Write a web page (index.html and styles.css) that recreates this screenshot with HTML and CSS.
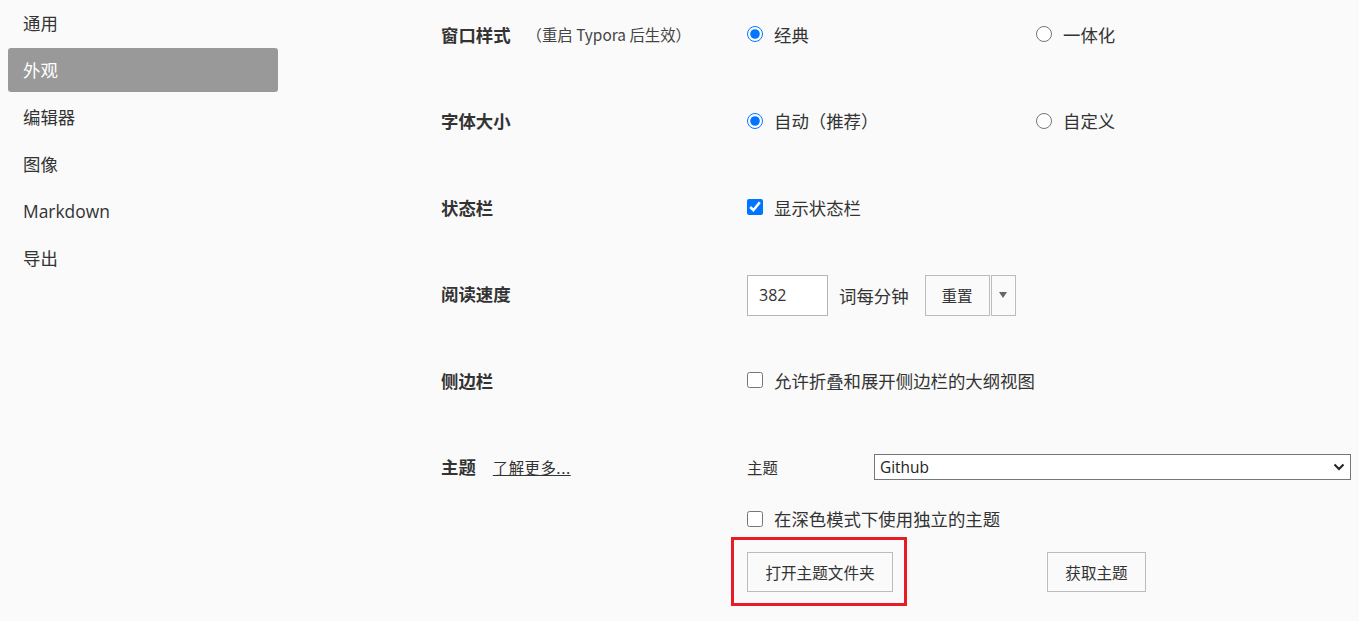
FILE: index.html
```html
<!DOCTYPE html>
<html lang="zh-CN">
<head>
<meta charset="utf-8">
<title>偏好设置 - 外观</title>
<link rel="stylesheet" href="styles.css">
</head>
<body>
<div class="page">
  <nav class="sidebar">
    <div class="nav-item">通用</div>
    <div class="nav-item active">外观</div>
    <div class="nav-item">编辑器</div>
    <div class="nav-item">图像</div>
    <div class="nav-item latin">Markdown</div>
    <div class="nav-item">导出</div>
  </nav>
  <main class="main">
    <section class="row">
      <div class="label"><span class="title">窗口样式</span><span class="hint">（重启 Typora 后生效）</span></div>
      <div class="value">
        <div class="options">
          <label class="opt"><input type="radio" name="win" checked><span>经典</span></label>
          <label class="opt"><input type="radio" name="win"><span>一体化</span></label>
        </div>
      </div>
    </section>
    <section class="row">
      <div class="label"><span class="title">字体大小</span></div>
      <div class="value">
        <div class="options">
          <label class="opt"><input type="radio" name="font" checked><span>自动（推荐）</span></label>
          <label class="opt"><input type="radio" name="font"><span>自定义</span></label>
        </div>
      </div>
    </section>
    <section class="row">
      <div class="label"><span class="title">状态栏</span></div>
      <div class="value">
        <label class="opt"><input type="checkbox" checked><span>显示状态栏</span></label>
      </div>
    </section>
    <section class="row">
      <div class="label"><span class="title">阅读速度</span></div>
      <div class="value">
        <div class="speed">
          <input class="num" type="text" value="382">
          <span class="unit">词每分钟</span>
          <div class="split">
            <button class="btn reset">重置</button>
            <button class="btn caret"><svg width="10" height="8" viewBox="0 0 10 8"><path d="M1 1h8L5 7z" fill="#666"/></svg></button>
          </div>
        </div>
      </div>
    </section>
    <section class="row">
      <div class="label"><span class="title">侧边栏</span></div>
      <div class="value">
        <label class="opt"><input type="checkbox"><span>允许折叠和展开侧边栏的大纲视图</span></label>
      </div>
    </section>
    <section class="row theme-row">
      <div class="label"><span class="title">主题</span><a class="more" href="#">了解更多...</a></div>
      <div class="value">
        <div class="theme-select">
          <span class="small-label">主题</span>
          <div class="select-wrap">
            <select class="select"><option>Github</option></select>
            <svg class="chev" width="12" height="8" viewBox="0 0 12 8"><path d="M1.5 1.5L6 6l4.5-4.5" fill="none" stroke="#222" stroke-width="2"/></svg>
          </div>
        </div>
        <label class="opt dark-opt"><input type="checkbox"><span>在深色模式下使用独立的主题</span></label>
        <div class="theme-buttons">
          <div class="highlight-wrap">
            <button class="btn big">打开主题文件夹</button>
            <div class="highlight"></div>
          </div>
          <button class="btn big">获取主题</button>
        </div>
      </div>
    </section>
  </main>
</div>
</body>
</html>
```

FILE: styles.css
```css
* { box-sizing: border-box; }
html, body {
  margin: 0;
  padding: 0;
  background: #fafafa;
  font-family: "Noto Sans CJK SC", "Noto Sans", sans-serif;
  color: #333;
}
.page {
  display: flex;
  width: 1359px;
  height: 621px;
  overflow: hidden;
}
.sidebar {
  width: 270px;
  margin-left: 8px;
  padding-top: 1px;
  display: flex;
  flex-direction: column;
  gap: 3px;
  flex: none;
}
.nav-item {
  height: 44px;
  line-height: 44px;
  padding-left: 15px;
  font-size: 17.4px;
  color: #333;
  border-radius: 3px;
  font-family: "Noto Sans CJK SC", sans-serif;
}
.nav-item.latin {
  font-family: "Open Sans", "Noto Sans CJK SC", sans-serif;
}
.nav-item.active {
  background: #999;
  color: #fff;
}
.main {
  margin-left: 163px;
  padding-top: 21px;
  flex: 1;
}
.row {
  display: flex;
  height: 86.6px;
}
.label {
  width: 306px;
  flex: none;
  display: flex;
  align-items: center;
  height: 26px;
}
.title {
  font-weight: bold;
  font-size: 17.4px;
  color: #333;
}
.hint {
  font-size: 15.4px;
  color: #444;
  margin-left: 16px;
}
.value {
  flex: 1;
}
.options {
  display: flex;
}
.options .opt {
  width: 289px;
}
.opt {
  display: flex;
  align-items: center;
  height: 26px;
  font-size: 17.4px;
  color: #333;
}
.opt input {
  margin: 0 11px 0 0;
  width: 16px;
  height: 16px;
  accent-color: #0075ff;
  flex: none;
}
.speed {
  display: flex;
  align-items: center;
  margin-top: -6px;
}
.num {
  width: 81px;
  height: 41px;
  border: 1px solid #b5b5b5;
  background: #fff;
  font-family: "Open Sans", "Noto Sans", sans-serif;
  font-size: 16px;
  color: #333;
  padding: 0 0 0 11px;
  outline: none;
}
.unit {
  font-size: 17.4px;
  margin-left: 11px;
  margin-right: 16px;
}
.split {
  display: flex;
  gap: 1px;
}
.btn {
  background: #fafafa;
  border: 1px solid #bcbcbc;
  border-radius: 0;
  font-family: "Noto Sans CJK SC", sans-serif;
  color: #333;
  padding: 0;
}
.reset {
  width: 65px;
  height: 41px;
  font-size: 15.6px;
}
.caret {
  width: 25px;
  height: 41px;
  display: flex;
  align-items: flex-start;
  justify-content: center;
  padding-top: 15px;
}
.more {
  font-size: 15.4px;
  color: #333;
  margin-left: 17px;
  text-decoration: underline;
  letter-spacing: 0.5px;
}
.theme-select {
  display: flex;
  align-items: center;
  height: 26px;
}
.small-label {
  width: 127px;
  font-size: 15.4px;
  color: #333;
}
.select-wrap {
  position: relative;
  width: 477px;
  height: 26px;
}
.select {
  appearance: none;
  -webkit-appearance: none;
  width: 100%;
  height: 26px;
  border: 1px solid #767676;
  border-radius: 0;
  background: #fff;
  font-family: "Open Sans", "Noto Sans", sans-serif;
  font-size: 15.4px;
  color: #222;
  padding: 0 0 0 5px;
  outline: none;
}
.chev {
  position: absolute;
  right: 6px;
  top: 9px;
  pointer-events: none;
}
.dark-opt {
  margin-top: 26px;
}
.theme-buttons {
  display: flex;
  gap: 154px;
  margin-top: 20px;
}
.highlight-wrap {
  position: relative;
}
.big {
  height: 40px;
  font-size: 15.6px;
  padding: 0 17px;
}
.highlight-wrap .big {
  width: 146px;
}
.theme-buttons > .big {
  width: 99px;
}
.highlight {
  position: absolute;
  left: -16px;
  top: -15px;
  width: 176px;
  height: 69px;
  border: 3px solid #e81c24;
  pointer-events: none;
}
```
